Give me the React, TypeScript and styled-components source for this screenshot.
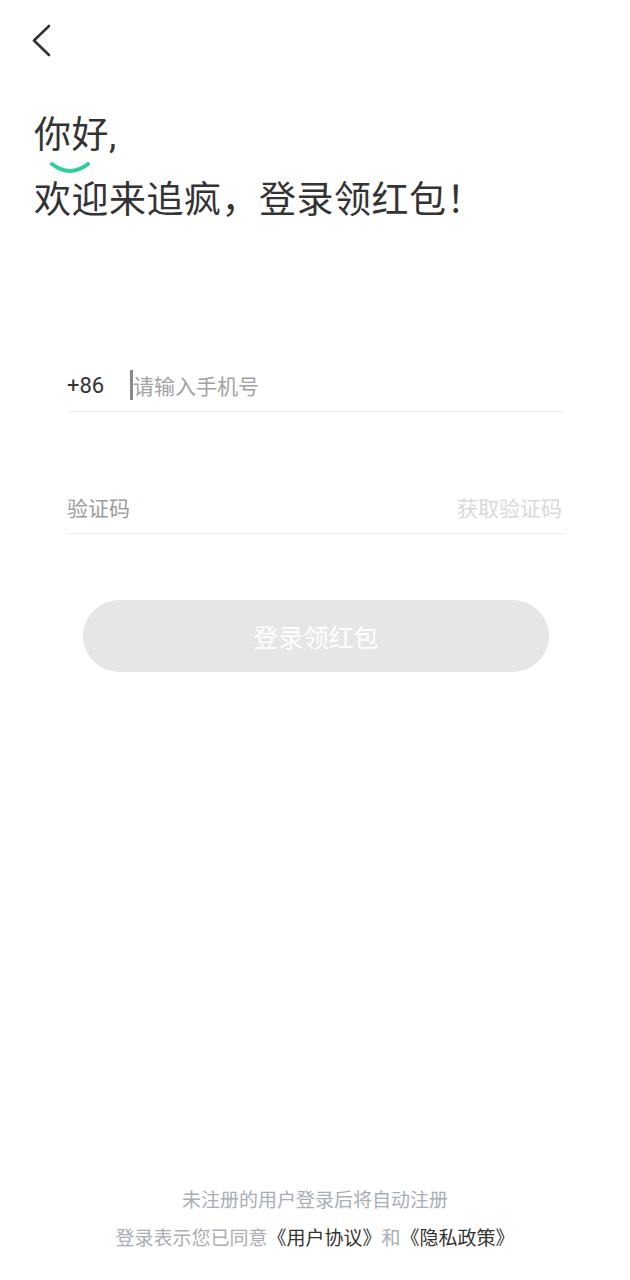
import React from "react";
import styled, { createGlobalStyle } from "styled-components";

const GlobalStyle = createGlobalStyle`
  html, body {
    margin: 0;
    padding: 0;
    background: #ffffff;
  }
  body {
    font-family: Roboto, "Noto Sans CJK SC", sans-serif;
    -webkit-font-smoothing: antialiased;
  }
  * { box-sizing: border-box; }
`;

const Page = styled.div`
  min-height: 100vh;
  display: flex;
  flex-direction: column;
  background: #ffffff;
`;

const Header = styled.header`
  padding: 24px 0 0 31px;
  height: 58px;
`;

const BackButton = styled.button`
  display: block;
  width: 20px;
  height: 34px;
  padding: 0;
  border: none;
  background: transparent;
  cursor: pointer;
`;

const Greeting = styled.section`
  margin: 59px 0 0 34px;
  color: #333333;
`;

const GreetLine = styled.div`
  font-size: 37px;
  line-height: 37px;
  font-family: Roboto, "Noto Sans CJK SC", sans-serif;
  letter-spacing: 0.5px;
  white-space: nowrap;
`;

const Smile = styled.svg`
  display: block;
  margin: 7px 0 7px 16px;
`;

const Form = styled.form`
  margin: 140px 65px 0 67px;
  display: flex;
  flex-direction: column;
`;

const Field = styled.div<{ $gapTop?: number }>`
  display: flex;
  align-items: center;
  height: 53px;
  border-bottom: 1px solid #eeeeee;
  margin-top: ${(p) => p.$gapTop ?? 0}px;
`;

const Prefix = styled.span`
  width: 63px;
  flex-shrink: 0;
  font-size: 22px;
  color: #333333;
  font-family: Roboto, "Noto Sans CJK SC", sans-serif;
`;

const Cursor = styled.span`
  width: 3px;
  height: 30px;
  background: #8a8a8a;
  flex-shrink: 0;
`;

const Input = styled.input`
  flex: 1;
  min-width: 0;
  border: none;
  outline: none;
  padding: 0;
  background: transparent;
  font-size: 21px;
  font-family: "Noto Sans CJK SC", sans-serif;
  color: #333333;
  &::placeholder {
    color: #a3a3a3;
  }
`;

const CodeInput = styled(Input)`
  &::placeholder {
    color: #9c9c9c;
  }
`;

const GetCode = styled.button`
  border: none;
  background: transparent;
  padding: 0 3px 0 0;
  font-size: 21px;
  font-family: "Noto Sans CJK SC", sans-serif;
  color: #d9d9d9;
  cursor: pointer;
`;

const Submit = styled.button`
  align-self: center;
  width: 466px;
  height: 72px;
  margin-top: 66px;
  border: none;
  border-radius: 36px;
  background: #e6e6e6;
  color: #ffffff;
  font-size: 25px;
  font-family: "Noto Sans CJK SC", sans-serif;
  cursor: pointer;
`;

const Footer = styled.footer`
  margin-top: auto;
  padding-bottom: 24px;
  display: flex;
  flex-direction: column;
  align-items: center;
`;

const FooterLine = styled.p`
  margin: 0;
  font-size: 19px;
  line-height: 38px;
  color: #a9aeb6;
  font-family: "Noto Sans CJK SC", sans-serif;
  white-space: nowrap;
`;

const Link = styled.a`
  color: #333333;
  text-decoration: none;
`;

export default function App() {
  return (
    <>
      <GlobalStyle />
      <Page>
        <Header>
          <BackButton aria-label="返回">
            <svg width="20" height="34" viewBox="0 0 20 34">
              <polyline
                points="18,2 3,16.5 18,31"
                fill="none"
                stroke="#333333"
                strokeWidth="2.6"
                strokeLinecap="round"
                strokeLinejoin="round"
              />
            </svg>
          </BackButton>
        </Header>

        <Greeting>
          <GreetLine>你好,</GreetLine>
          <Smile width="42" height="14" viewBox="0 0 42 14">
            <path
              d="M2 3 Q20 17 38 3"
              fill="none"
              stroke="#2fcf9c"
              strokeWidth="4"
              strokeLinecap="round"
            />
          </Smile>
          <GreetLine>欢迎来追疯，登录领红包！</GreetLine>
        </Greeting>

        <Form onSubmit={(e) => e.preventDefault()}>
          <Field>
            <Prefix>+86</Prefix>
            <Cursor />
            <Input placeholder="请输入手机号" />
          </Field>
          <Field $gapTop={69}>
            <CodeInput placeholder="验证码" />
            <GetCode type="button">获取验证码</GetCode>
          </Field>
          <Submit type="submit">登录领红包</Submit>
        </Form>

        <Footer>
          <FooterLine>未注册的用户登录后将自动注册</FooterLine>
          <FooterLine>
            登录表示您已同意<Link href="#">《用户协议》</Link>和<Link href="#">《隐私政策》</Link>
          </FooterLine>
        </Footer>
      </Page>
    </>
  );
}
